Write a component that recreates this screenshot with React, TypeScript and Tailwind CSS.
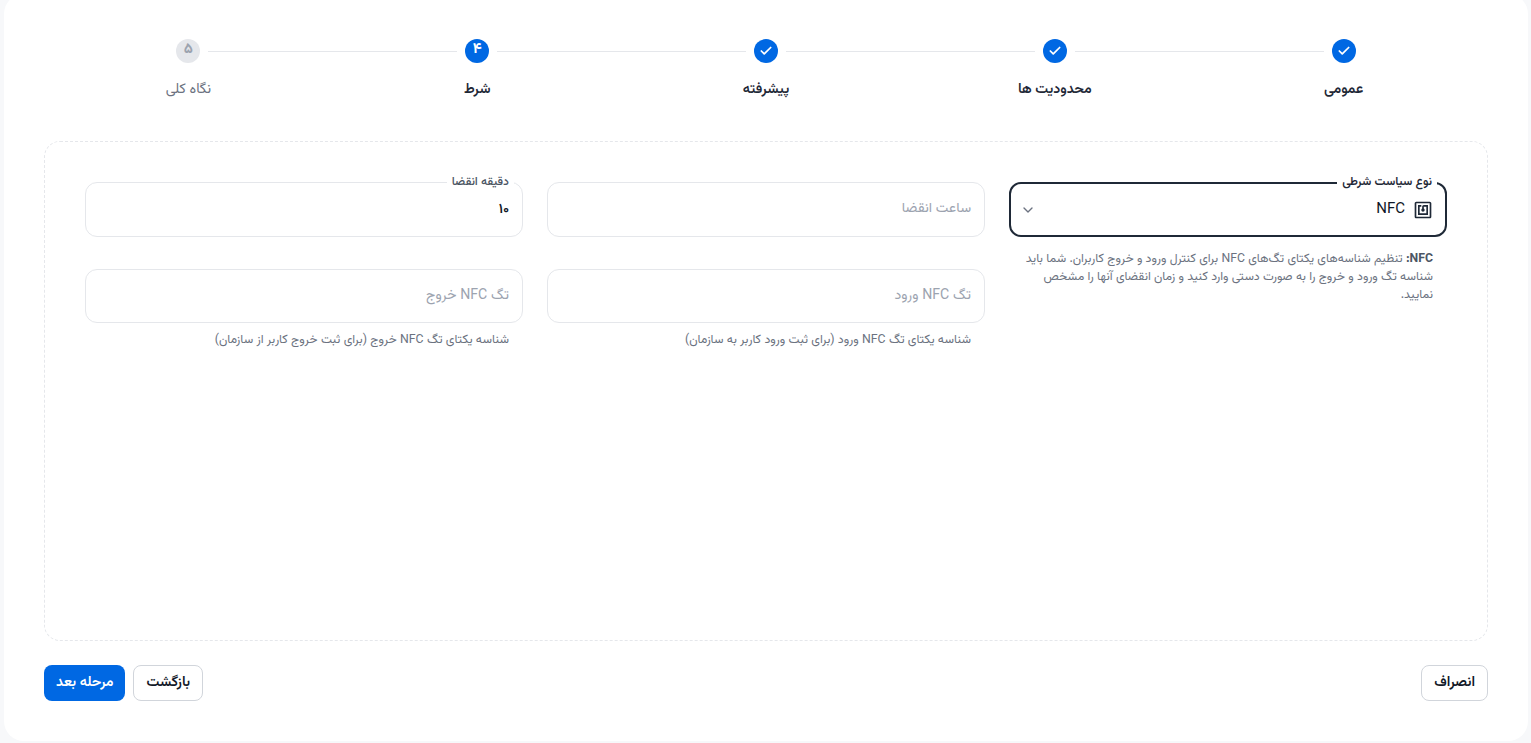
import { Check, ChevronDown } from "lucide-react";
import { MdNfc } from "react-icons/md";

const steps = [
  { label: "عمومی", state: "done" },
  { label: "محدودیت ها", state: "done" },
  { label: "پیشرفته", state: "done" },
  { label: "شرط", state: "current", n: "۴" },
  { label: "نگاه کلی", state: "todo", n: "۵" },
];

function Step({ s, i }: { s: (typeof steps)[number]; i: number }) {
  return (
    <div className="relative flex flex-col items-center">
      {i < steps.length - 1 && (
        <div className="absolute top-[12px] left-[-124.6px] h-px w-[249px] bg-[#e5e7eb]" />
      )}
      {s.state === "done" && (
        <div className="flex h-6 w-6 items-center justify-center rounded-full bg-[#0068e3] text-white">
          <Check size={14} strokeWidth={3} />
        </div>
      )}
      {s.state === "current" && (
        <div className="flex h-6 w-6 items-center justify-center rounded-full bg-[#0068e3] pb-[1px] text-[15px] font-bold text-white">
          {s.n}
        </div>
      )}
      {s.state === "todo" && (
        <div className="flex h-6 w-6 items-center justify-center rounded-full bg-[#e5e7eb] pb-[1px] text-[15px] font-bold text-[#9ca3af]">
          {s.n}
        </div>
      )}
      <div
        className={`mt-[16px] text-[14.2px] leading-[22px] ${
          s.state === "todo" ? "text-[#6b7280]" : "font-semibold text-[#1f2937]"
        }`}
      >
        {s.label}
      </div>
    </div>
  );
}

function Field({
  label,
  value,
  placeholder,
  help,
  h = "h-[55px]",
}: {
  label?: string;
  value?: string;
  placeholder?: string;
  help?: string;
  h?: string;
}) {
  return (
    <div>
      <div className={`relative flex items-center rounded-xl border border-[#e5e7eb] bg-white px-[13px] pt-[1px] ${h}`}>
        {label && (
          <span className="absolute top-[-9px] right-[8px] bg-white px-[5px] text-xs leading-[16px] font-medium text-[#4b5563]">
            {label}
          </span>
        )}
        {value ? (
          <span className="text-sm font-semibold text-[#111827]">{value}</span>
        ) : (
          <span className="text-[14.1px] text-[#9ca3af]">{placeholder}</span>
        )}
      </div>
      {help && (
        <p className="mt-[9px] pr-[14px] pl-[13px] text-[12.3px] leading-[17px] text-[#6b7280]">{help}</p>
      )}
    </div>
  );
}

export default function App() {
  return (
    <div
      dir="rtl"
      className="h-[743px] overflow-hidden bg-[#f7f8fa] pr-[3px] pb-[2px] pl-[4px] font-['Vazirmatn','DejaVu_Sans',sans-serif]"
    >
      <div className="mt-[-6px] flex h-[747px] flex-col rounded-[20px] bg-white px-[40px] pt-[45px] pb-[40px]">
        <div className="grid h-[102px] shrink-0 grid-cols-5">
          {steps.map((s, i) => (
            <Step key={s.label} s={s} i={i} />
          ))}
        </div>

        <div className="grid h-[500px] shrink-0 grid-cols-3 content-start gap-x-6 rounded-2xl border border-dashed border-[#e5e7eb] p-10">
          <div className="row-span-2">
            <div className="relative flex h-[55px] items-center justify-between rounded-xl border-2 border-[#1f2937] bg-white pr-[12px] pl-[9px]">
              <span className="absolute top-[-10px] right-[8px] bg-white px-[5px] text-xs leading-[16px] font-semibold text-[#1f2937]">
                نوع سیاست شرطی
              </span>
              <div className="flex items-center gap-2 text-[15px] text-[#111827]">
                <MdNfc size={20} className="text-[#1f2937]" />
                <span className="mt-[2px]">NFC</span>
              </div>
              <ChevronDown size={16} className="text-[#6b7280]" />
            </div>
            <p className="mt-[13px] pr-[14px] pl-[12px] text-[12.25px] leading-[18px] text-[#6b7280]">
              <b className="font-bold text-[#4b5563]">NFC:</b> تنظیم شناسه‌های یکتای تگ‌های NFC برای کنترل ورود و خروج کاربران. شما باید شناسه تگ ورود و خروج را به صورت دستی وارد کنید و زمان انقضای آنها را مشخص نمایید.
            </p>
          </div>
          <Field placeholder="ساعت انقضا" />
          <Field label="دقیقه انقضا" value="۱۰" />
          <div className="col-start-2 mt-[32px]">
            <Field h="h-[54px]" placeholder="تگ NFC ورود" help="شناسه یکتای تگ NFC ورود (برای ثبت ورود کاربر به سازمان)" />
          </div>
          <div className="mt-[32px]">
            <Field h="h-[54px]" placeholder="تگ NFC خروج" help="شناسه یکتای تگ NFC خروج (برای ثبت خروج کاربر از سازمان)" />
          </div>
        </div>

        <div className="mt-[24px] flex h-9 items-stretch justify-between">
          <button className="rounded-lg border border-[#d1d5db] bg-white px-3 text-[14.2px] font-semibold text-[#111827]">
            انصراف
          </button>
          <div className="flex gap-2">
            <button className="rounded-lg border border-[#d1d5db] bg-white px-3 text-[14.2px] font-semibold text-[#111827]">
              بازگشت
            </button>
            <button className="rounded-lg bg-[#0068e3] px-3 text-[14.2px] font-semibold text-white">
              مرحله بعد
            </button>
          </div>
        </div>
      </div>
    </div>
  );
}
